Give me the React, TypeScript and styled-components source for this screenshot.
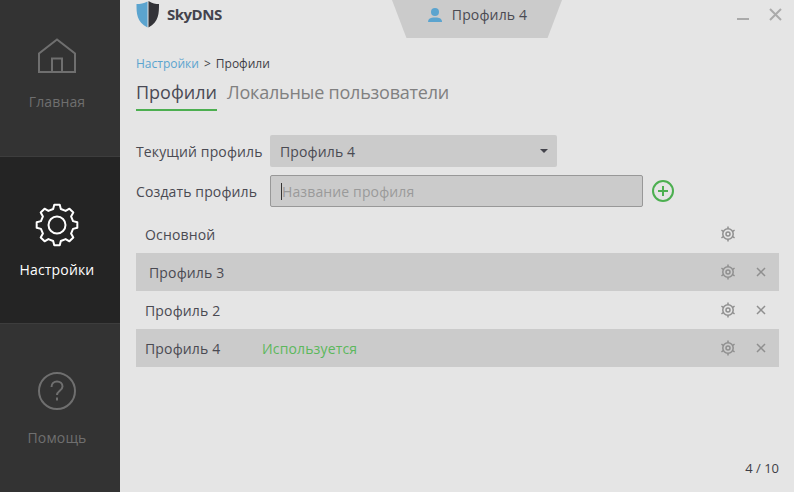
import React from "react";
import styled, { createGlobalStyle } from "styled-components";

const Global = createGlobalStyle`
  html, body { margin: 0; padding: 0; background: #e5e5e5; }
  body { font-family: "Open Sans", "Noto Sans", sans-serif; overflow: hidden; }
  * { box-sizing: border-box; }
`;

const Shell = styled.div`
  display: flex;
  width: 794px;
  height: 492px;
  background: #e5e5e5;
  color: #4a4a52;
`;

const Sidebar = styled.nav`
  display: flex;
  flex-direction: column;
  width: 120px;
  flex: none;
  background: #333333;
`;

const NavItem = styled.div<{ $active?: boolean; $h: number; $pad: number; $gap: number }>`
  display: flex;
  flex-direction: column;
  align-items: center;
  height: ${(p) => p.$h}px;
  padding: ${(p) => p.$pad}px 6px 0 0;
  gap: ${(p) => p.$gap}px;
  flex: none;
  background: ${(p) => (p.$active ? "#242424" : "#333333")};
  border-top: ${(p) => (p.$active ? "1px solid #3d3d3d" : "none")};
  border-bottom: ${(p) => (p.$active ? "1px solid #3d3d3d" : "none")};
  color: ${(p) => (p.$active ? "#ffffff" : "#6f6f6f")};
`;

const NavLabel = styled.span`
  font-size: 14px;
  line-height: 20px;
  letter-spacing: 0.15px;
`;

const Main = styled.main`
  flex: 1;
  min-width: 0;
  display: flex;
  flex-direction: column;
`;

const TitleBar = styled.header`
  display: flex;
  align-items: flex-start;
  height: 38px;
  flex: none;
  padding-left: 16px;
`;

const Logo = styled.div`
  display: flex;
  align-items: center;
  gap: 7px;
  width: 256px;
  height: 28px;
  flex: none;
`;

const LogoText = styled.span`
  font-family: "Open Sans", sans-serif;
  font-size: 15px;
  font-weight: 700;
  letter-spacing: -0.5px;
  color: #43434d;
`;

const ProfileTab = styled.div`
  display: flex;
  align-items: center;
  justify-content: center;
  gap: 9px;
  width: 170px;
  height: 38px;
  padding-bottom: 9px;
  flex: none;
  background: #cbcbcb;
  clip-path: polygon(0 0, 100% 0, 91.5% 100%, 8.5% 100%);
  font-size: 14px;
  letter-spacing: 0.15px;
`;

const WinControls = styled.div`
  display: flex;
  align-items: flex-start;
  gap: 19px;
  margin-left: auto;
  padding: 8px 12px 0 0;
`;

const Content = styled.div`
  display: flex;
  flex-direction: column;
  flex: 1;
  padding: 17px 15px 0 16px;
`;

const Crumbs = styled.div`
  display: flex;
  gap: 5px;
  font-size: 12px;
  line-height: 18px;
  color: #3e3e46;
`;

const CrumbLink = styled.span`
  color: #5ba4cf;
`;

const Tabs = styled.div`
  display: flex;
  gap: 10px;
  margin-top: 7px;
`;

const Tab = styled.div<{ $active?: boolean }>`
  font-size: 18px;
  line-height: 24px;
  height: 31px;
  letter-spacing: ${(p) => (p.$active ? "0" : "-0.22px")};
  color: ${(p) => (p.$active ? "#4a4a55" : "#808080")};
  border-bottom: ${(p) => (p.$active ? "2px solid #4caf50" : "none")};
`;

const FormRow = styled.div<{ $top: number }>`
  display: flex;
  align-items: center;
  height: 32px;
  margin-top: ${(p) => p.$top}px;
  letter-spacing: 0.13px;
`;

const FormLabel = styled.label`
  width: 134px;
  flex: none;
  font-size: 14px;
`;

const SelectBox = styled.div`
  display: flex;
  align-items: center;
  justify-content: space-between;
  width: 287px;
  height: 32px;
  padding: 0 9px 0 10px;
  background: #cbcbcb;
  border-radius: 2px;
  font-size: 14px;
`;

const Caret = styled.span`
  width: 0;
  height: 0;
  border-left: 4px solid transparent;
  border-right: 4px solid transparent;
  border-top: 4px solid #44444c;
`;

const InputBox = styled.div`
  display: flex;
  align-items: center;
  width: 373px;
  height: 32px;
  padding-left: 10px;
  background: #cbcbcb;
  border: 1px solid #989898;
  border-radius: 2px;
  font-size: 14px;
  color: #9a9a9a;
`;

const CaretBar = styled.span`
  width: 1px;
  height: 17px;
  background: #333;
  flex: none;
`;

const AddBtn = styled.div`
  display: flex;
  margin-left: 9px;
`;

const List = styled.div`
  display: flex;
  flex-direction: column;
  margin-top: 8px;
`;

const Row = styled.div<{ $shaded?: boolean; $indent: number }>`
  display: flex;
  align-items: center;
  height: 38px;
  padding-left: ${(p) => p.$indent}px;
  background: ${(p) => (p.$shaded ? "#cbcbcb" : "transparent")};
  font-size: 14px;
  letter-spacing: 0.15px;
`;

const RowName = styled.span`
  width: 117px;
  flex: none;
`;

const Status = styled.span`
  color: #5cb85c;
`;

const RowActions = styled.div`
  display: flex;
  align-items: center;
  margin-left: auto;
  padding-right: 13px;
  gap: 20px;
`;

const CloseSlot = styled.span`
  display: flex;
  width: 10px;
  height: 10px;
`;

const Footer = styled.div`
  margin-top: auto;
  padding-bottom: 15px;
  text-align: right;
  font-size: 13px;
  line-height: 17px;
  color: #3e3e46;
`;

const gearPath = (cx: number, cy: number, outer: number, inner: number, teeth: number) => {
  const pts: string[] = [];
  const step = (Math.PI * 2) / teeth;
  for (let i = 0; i < teeth; i++) {
    const a = -Math.PI / 2 + i * step;
    const w = step * 0.17;
    const v = step * 0.3;
    const p = (r: number, t: number) =>
      `${(cx + r * Math.cos(t)).toFixed(2)} ${(cy + r * Math.sin(t)).toFixed(2)}`;
    pts.push(p(inner, a - v), p(outer, a - w), p(outer, a + w), p(inner, a + v));
  }
  return `M${pts.join("L")}Z`;
};

const nubs = [0, 60, 120, 180, 240, 300].map((deg) => {
  const t = (deg * Math.PI) / 180;
  const f = (r: number) => `${(8 + r * Math.sin(t)).toFixed(2)} ${(8 - r * Math.cos(t)).toFixed(2)}`;
  return `M${f(5.4)}L${f(7.6)}`;
});

const HomeIcon = () => (
  <svg width="38" height="36" viewBox="0 0 38 36" fill="none" stroke="#6f6f6f" strokeWidth="2">
    <path d="M1 34V15.500L19 1.500 37 15.500V34Z" />
    <path d="M14 34V20.500H24V34" />
  </svg>
);

const BigGear = () => (
  <svg width="44" height="44" viewBox="0 0 44 44" fill="none" stroke="#fff" strokeWidth="2">
    <path d={gearPath(22, 22, 20.5, 16.5, 8)} strokeLinejoin="round" />
    <circle cx="22" cy="22" r="8.5" />
  </svg>
);

const HelpIcon = () => (
  <svg width="40" height="40" viewBox="0 0 40 40" fill="none" stroke="#6f6f6f" strokeWidth="2">
    <circle cx="20" cy="20" r="18" />
    <path d="M14.500 16c0-3.500 2.500-5.500 5.500-5.500s5.500 2 5.500 5c0 4-5.500 4.500-5.500 8.500" />
    <path d="M20 26.500v3" />
  </svg>
);

const SmallGear = () => (
  <svg width="16" height="16" viewBox="0 0 16 16" fill="none" stroke="#8f8f8f" strokeWidth="1.5">
    <circle cx="8" cy="8" r="5.2" />
    <circle cx="8" cy="8" r="2" />
    <path d={nubs.join("")} />
  </svg>
);

const SmallClose = () => (
  <svg width="10" height="10" viewBox="0 0 10 10" stroke="#8f8f8f" strokeWidth="1.5">
    <path d="M1 1l8 8M9 1L1 9" />
  </svg>
);

const Shield = () => (
  <svg width="24" height="28" viewBox="0 0 24 28">
    <path d="M11.500 1.500C8 3.500 4 4 .5 4c0 9 0 18 11 23.500Z" fill="#5ba4cf" />
    <path d="M12.500 1C16 3.500 20 4 23 4c0 9 0 18-10.500 23.500Z" fill="#333338" />
  </svg>
);

const UserIcon = () => (
  <svg width="16" height="16" viewBox="0 0 16 16" fill="#5ba4cf">
    <circle cx="8" cy="5" r="4" />
    <path d="M1 15c0-3 2-4 5-4.500h4c3 .5 5 1.500 5 4.500Z" />
  </svg>
);

const PlusIcon = () => (
  <svg width="22" height="22" viewBox="0 0 22 22" fill="none" stroke="#4caf50" strokeWidth="2">
    <circle cx="11" cy="11" r="10" />
    <path d="M11 6v10M6 11h10" />
  </svg>
);

const profiles = [
  { name: "Основной", indent: 9, shaded: false, close: false },
  { name: "Профиль 3", indent: 13, shaded: true, close: true },
  { name: "Профиль 2", indent: 9, shaded: false, close: true },
  { name: "Профиль 4", indent: 9, shaded: true, close: true, status: "Используется" },
];

export default function App() {
  return (
    <Shell>
      <Global />
      <Sidebar>
        <NavItem $h={156} $pad={38} $gap={18}>
          <HomeIcon />
          <NavLabel>Главная</NavLabel>
        </NavItem>
        <NavItem $active $h={168} $pad={46} $gap={13}>
          <BigGear />
          <NavLabel>Настройки</NavLabel>
        </NavItem>
        <NavItem $h={168} $pad={47} $gap={17}>
          <HelpIcon />
          <NavLabel>Помощь</NavLabel>
        </NavItem>
      </Sidebar>
      <Main>
        <TitleBar>
          <Logo>
            <Shield />
            <LogoText>SkyDNS</LogoText>
          </Logo>
          <ProfileTab>
            <UserIcon />
            <span>Профиль 4</span>
          </ProfileTab>
          <WinControls>
            <svg width="13" height="13" viewBox="0 0 13 13" stroke="#aaaaaa" strokeWidth="2">
              <path d="M0 11h12" />
            </svg>
            <svg width="13" height="13" viewBox="0 0 13 13" stroke="#aaaaaa" strokeWidth="2">
              <path d="M1 1l11 11M12 1L1 12" />
            </svg>
          </WinControls>
        </TitleBar>
        <Content>
          <Crumbs>
            <CrumbLink>Настройки</CrumbLink>
            <span>&gt;</span>
            <span>Профили</span>
          </Crumbs>
          <Tabs>
            <Tab $active>Профили</Tab>
            <Tab>Локальные пользователи</Tab>
          </Tabs>
          <FormRow $top={24}>
            <FormLabel>Текущий профиль</FormLabel>
            <SelectBox>
              <span>Профиль 4</span>
              <Caret />
            </SelectBox>
          </FormRow>
          <FormRow $top={8}>
            <FormLabel>Создать профиль</FormLabel>
            <InputBox>
              <CaretBar />
              <span>Название профиля</span>
            </InputBox>
            <AddBtn>
              <PlusIcon />
            </AddBtn>
          </FormRow>
          <List>
            {profiles.map((p) => (
              <Row key={p.name} $shaded={p.shaded} $indent={p.indent}>
                <RowName>{p.name}</RowName>
                {p.status && <Status>{p.status}</Status>}
                <RowActions>
                  <SmallGear />
                  <CloseSlot>{p.close && <SmallClose />}</CloseSlot>
                </RowActions>
              </Row>
            ))}
          </List>
          <Footer>4 / 10</Footer>
        </Content>
      </Main>
    </Shell>
  );
}
